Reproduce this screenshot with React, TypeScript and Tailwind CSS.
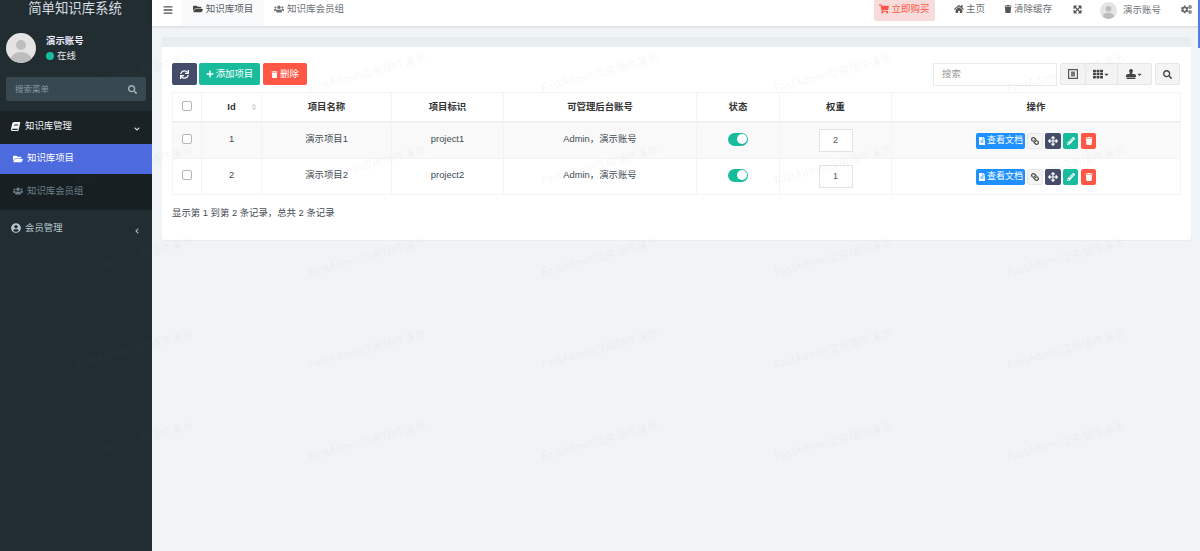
import React from "react";
import { FaBars, FaFolderOpen, FaUsers, FaBook, FaUserCircle, FaShoppingCart, FaHome, FaTrash, FaArrowsAlt, FaCogs, FaSync, FaPlus, FaTh, FaSearch, FaFileAlt, FaLink, FaPencilAlt, FaChevronDown, FaChevronLeft, FaSort, FaCaretDown, FaStamp } from "react-icons/fa";

const font = { fontFamily: '"Liberation Sans", "Noto Sans CJK SC", sans-serif' };

function Avatar({ size }: { size: number }) {
  return (
    <svg width={size} height={size} viewBox="0 0 30 30" className="shrink-0">
      <defs><clipPath id={`c${size}`}><circle cx="15" cy="15" r="15" /></clipPath></defs>
      <circle cx="15" cy="15" r="15" fill="#e4e4e4" />
      <g clipPath={`url(#c${size})`}>
        <circle cx="15" cy="12" r="5" fill="#bdbdbd" />
        <ellipse cx="15" cy="27" rx="10.5" ry="8" fill="#bdbdbd" />
      </g>
    </svg>
  );
}

function Row({ id, name, code, weight, striped }: { id: number; name: string; code: string; weight: number; striped: boolean }) {
  const cell = "border-l border-[#f4f4f4] flex items-center justify-center";
  return (
    <div className={`flex h-[36px] border-t border-[#f4f4f4] text-[9.4px] text-[#444c54] ${striped ? "bg-[#f9f9f9]" : "bg-transparent"}`}>
      <div className="w-[28px] flex items-center justify-center pb-[4px]"><span className="w-[8px] h-[8px] box-content border border-[#b5b5b5] rounded-[2px] bg-white" /></div>
      <div className={`${cell} w-[60px] pb-[2px]`}>{id}</div>
      <div className={`${cell} w-[130px] pb-[2px]`}>{name}</div>
      <div className={`${cell} w-[112px] pb-[2px]`}>{code}</div>
      <div className={`${cell} w-[193px] pb-[2px]`}>Admin，演示账号</div>
      <div className={`${cell} w-[83px] pb-[3px]`}>
        <span className="w-[20px] h-[13px] rounded-full bg-[#18bc9c] flex items-center justify-end pr-[1px]"><span className="w-[10px] h-[10px] rounded-full bg-white" /></span>
      </div>
      <div className={`${cell} w-[112px]`}>
        <span className="w-[34px] h-[23px] border border-[#e0e4e8] bg-white flex items-center justify-center text-[9px] text-[#555]">{weight}</span>
      </div>
      <div className={`${cell} flex-1 gap-[2px]`}>
        <span className="h-[16px] w-[49px] rounded-[2px] bg-[#1e90ff] text-white text-[9px] flex items-center justify-center gap-[1px]"><FaFileAlt className="text-[8px]" />查看文档</span>
        <span className="h-[16px] w-[16px] rounded-[2px] bg-[#f4f4f4] border border-[#e8e8e8] text-[#444] flex items-center justify-center"><FaLink className="text-[8px] -scale-x-100" /></span>
        <span className="h-[16px] w-[16px] rounded-[2px] bg-[#444c69] text-white flex items-center justify-center"><FaArrowsAlt className="text-[10px]" /></span>
        <span className="h-[16px] w-[15px] rounded-[2px] bg-[#18bc9c] text-white flex items-center justify-center"><FaPencilAlt className="text-[8px]" /></span>
        <span className="h-[16px] w-[15px] ml-[1px] rounded-[2px] bg-[#ff5645] text-white flex items-center justify-center"><FaTrash className="text-[8px]" /></span>
      </div>
    </div>
  );
}

const marks: { x: number; y: number }[] = [];
for (let r = 0; r < 5; r++) for (let c = 0; c < 5; c++) marks.push({ x: 134 + c * 233, y: 73 + r * 92 });

export default function App() {
  return (
    <div className="relative flex h-[551px] w-[1200px] overflow-hidden bg-[#f1f4f6]" style={font}>
      <aside className="w-[152px] shrink-0 bg-[#222d32] text-white flex flex-col text-[9.4px]">
        <div className="h-[26px] flex items-center justify-center text-[13.4px] text-[#d8dde0] pb-[8px] pr-[2px]">简单知识库系统</div>
        <div className="flex h-[50px] items-center pl-[6px] pb-[6px]">
          <Avatar size={30} />
          <div className="ml-[10px] leading-[15px]">
            <div className="font-bold text-[#eef]">演示账号</div>
            <div className="flex items-center text-[#e8e8e8]"><span className="w-[8px] h-[8px] rounded-full bg-[#18bc9c] mr-[3px]" />在线</div>
          </div>
        </div>
        <div className="mx-[6px] mt-[1px] h-[24px] rounded-[2px] bg-[#374850] flex items-center justify-between px-[9px] text-[8.5px] text-[#8a9aa2]">
          <span>搜索菜单</span><FaSearch className="text-[9px] text-[#a8b4ba]" />
        </div>
        <div className="mt-[10px] bg-[#1a2226] h-[33px] flex items-center pl-[11px] pr-[12px] pb-[3px] text-[#f4f6f7]">
          <FaBook className="text-[9px] mr-[5px] -skew-x-12" />知识库管理<FaChevronDown className="ml-auto text-[6px] mt-[5px]" />
        </div>
        <div className="bg-[#4e6adf] h-[30px] flex items-center pl-[13px] pb-[1px] text-white">
          <FaFolderOpen className="text-[10px] mr-[4px]" />知识库项目
        </div>
        <div className="bg-[#171f23] h-[36px] flex items-center pl-[13px] pb-[2px] text-[#6d7f88]">
          <FaUsers className="text-[10px] mr-[4px]" />知识库会员组
        </div>
        <div className="h-[36px] flex items-center pl-[11px] pr-[12px] text-[#b8c7ce]">
          <FaUserCircle className="text-[10px] mr-[4px]" />会员管理<FaChevronLeft className="ml-auto text-[6px] mt-[6px]" />
        </div>
      </aside>

      <main className="flex-1 min-w-0 flex flex-col">
        <header className="h-[26px] bg-white shadow-[0_1px_3px_rgba(0,0,0,0.12)] flex items-stretch text-[9.5px] text-[#6a7176]">
          <div className="w-[30px] flex items-center justify-center text-[#555] pb-[7px] pl-[1px]"><FaBars className="text-[10px]" /></div>
          <div className="w-[82px] bg-[#f8f9fa] flex items-center justify-center gap-[3px] text-[#555c62] pb-[8px]"><FaFolderOpen className="text-[10px] text-[#444]" />知识库项目</div>
          <div className="flex items-center pl-[10px] gap-[3px] pb-[8px]"><FaUsers className="text-[10px]" />知识库会员组</div>
          <div className="ml-auto mr-[19px] w-[61px] bg-[#f8dcdc] text-[#ff5645] flex items-center justify-center gap-[2px] h-[21px] rounded-b-[2px] pb-[3px]"><FaShoppingCart className="text-[10px]" />立即购买</div>
          <div className="flex items-center gap-[2px] mr-[19px] pb-[8px]"><FaHome className="text-[10px] text-[#555]" />主页</div>
          <div className="flex items-center gap-[2px] mr-[20px] pb-[8px]"><FaTrash className="text-[8px] text-[#555]" />清除缓存</div>
          <div className="flex items-center mr-[17px] text-[#555] pb-[8px]"><FaArrowsAlt className="text-[11px] rotate-45" /></div>
          <div className="flex items-center gap-[6px] mr-[20px] pb-[5px]"><Avatar size={17} />演示账号</div>
          <div className="flex items-center mr-[8px] text-[#666] pb-[7px]"><FaCogs className="text-[11px]" /></div>
        </header>

        <div className="mt-[11px] mr-[9px] ml-[10px]">
          <div className="h-[10px] bg-[#e8edf0] rounded-t-[2px]" />
          <div className="h-[193px] bg-white rounded-b-[3px] px-[10px] pt-[16px] shadow-[0_1px_1px_rgba(0,0,0,0.03)]">
            <div className="flex h-[22px] items-start">
              <span className="w-[25px] h-[22px] rounded-[2px] bg-[#444c69] text-white flex items-center justify-center mr-[2px]"><FaSync className="text-[9px]" /></span>
              <span className="w-[61px] h-[22px] rounded-[2px] bg-[#18bc9c] text-white text-[9.4px] flex items-center justify-center gap-[2px] mr-[3px]"><FaPlus className="text-[8px]" />添加项目</span>
              <span className="w-[44px] h-[22px] rounded-[2px] bg-[#ff5645] text-white text-[9.4px] flex items-center justify-center gap-[2px]"><FaTrash className="text-[7px]" />删除</span>
              <div className="ml-auto flex pr-[1px]">
                <span className="w-[124px] h-[23px] border border-[#e8eaec] bg-white text-[9.4px] text-[#999] flex items-center pl-[8px] mr-[3px]">搜索</span>
                <div className="flex h-[22px] rounded-[2px] bg-[#f4f4f4] border border-[#e6e6e6] text-[#444] mr-[3px]">
                  <span className="w-[25px] flex items-center justify-center border-r border-[#e6e6e6]">
                    <svg width="10" height="10" viewBox="0 0 10 10"><rect x="0.6" y="0.6" width="8.8" height="8.8" fill="none" stroke="#555" strokeWidth="1.2" /><rect x="3" y="2.5" width="4" height="5" fill="#777" /></svg>
                  </span>
                  <span className="w-[32px] flex items-center justify-center border-r border-[#e6e6e6]"><FaTh className="text-[10px]" /><FaCaretDown className="text-[7px]" /></span>
                  <span className="w-[33px] flex items-center justify-center"><FaStamp className="text-[10px]" /><FaCaretDown className="text-[7px]" /></span>
                </div>
                <span className="w-[25px] h-[22px] rounded-[2px] bg-[#f4f4f4] border border-[#e6e6e6] text-[#444] flex items-center justify-center"><FaSearch className="text-[9px]" /></span>
              </div>
            </div>
            <div className="mt-[7px] border border-[#f4f4f4]">
              <div className="flex h-[29px] border-b border-[#ebebeb] text-[9.4px] font-bold text-[#333]">
                <div className="w-[28px] flex items-center justify-center pb-[2px]"><span className="w-[8px] h-[8px] box-content border border-[#b5b5b5] rounded-[2px] bg-white" /></div>
                <div className="relative w-[60px] border-l border-[#f4f4f4] flex items-center justify-center">Id<FaSort className="absolute right-[3px] text-[8px] text-[#d5d8da]" /></div>
                <div className="w-[130px] border-l border-[#f4f4f4] flex items-center justify-center">项目名称</div>
                <div className="w-[112px] border-l border-[#f4f4f4] flex items-center justify-center">项目标识</div>
                <div className="w-[193px] border-l border-[#f4f4f4] flex items-center justify-center">可管理后台账号</div>
                <div className="w-[83px] border-l border-[#f4f4f4] flex items-center justify-center">状态</div>
                <div className="w-[112px] border-l border-[#f4f4f4] flex items-center justify-center">权重</div>
                <div className="flex-1 border-l border-[#f4f4f4] flex items-center justify-center">操作</div>
              </div>
              <Row id={1} name="演示项目1" code="project1" weight={2} striped />
              <Row id={2} name="演示项目2" code="project2" weight={1} striped={false} />
            </div>
            <div className="mt-[11px] text-[9.4px] text-[#444c54]">显示第 1 到第 2 条记录，总共 2 条记录</div>
          </div>
        </div>
      </main>

      <div className="absolute right-0 top-0 w-[2px] h-[48px] bg-[#4e7fdf]" />
      <div className="absolute inset-0 pointer-events-none overflow-hidden">
        {marks.map((m, i) => (
          <span key={i} className="absolute whitespace-nowrap text-[11px] text-[rgba(110,120,130,0.08)] -translate-x-1/2 -translate-y-1/2 -rotate-[15deg]" style={{ left: m.x, top: m.y, fontFamily: '"Noto Sans", "Noto Sans CJK SC", sans-serif' }}>FastAdmin应用插件演示</span>
        ))}
      </div>
    </div>
  );
}
